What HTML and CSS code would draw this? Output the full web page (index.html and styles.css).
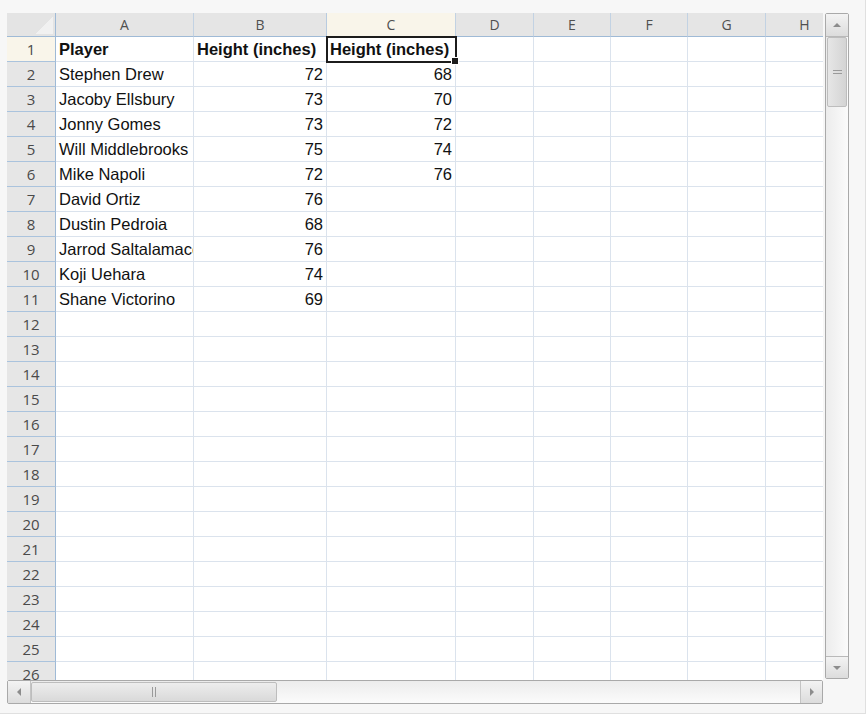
FILE: index.html
```html
<!DOCTYPE html>
<html lang="en">
<head>
    <meta charset="UTF-8">
    <title>Player Heights</title>
    <link rel="stylesheet" href="styles.css">
</head>
<body>
    <div class="window">
        <div class="workbook">
            <div class="sheet" id="sheet"></div>

            <div class="vscroll">
                <div class="sb-btn sb-up"><span class="arrow-up"></span></div>
                <div class="sb-thumb v-thumb"><span class="grip-h"></span></div>
                <div class="sb-track"></div>
                <div class="sb-btn sb-down"><span class="arrow-down"></span></div>
            </div>

            <div class="hscroll">
                <div class="sb-btn sb-left"><span class="arrow-left"></span></div>
                <div class="sb-thumb h-thumb"><span class="grip-v"></span></div>
                <div class="sb-track"></div>
                <div class="sb-btn sb-right"><span class="arrow-right"></span></div>
            </div>
        </div>
    </div>

    <script>
        const data = [
            ['Player', 'Height (inches)', 'Height (inches)'],
            ['Stephen Drew', 72, 68],
            ['Jacoby Ellsbury', 73, 70],
            ['Jonny Gomes', 73, 72],
            ['Will Middlebrooks', 75, 74],
            ['Mike Napoli', 72, 76],
            ['David Ortiz', 76],
            ['Dustin Pedroia', 68],
            ['Jarrod Saltalamacchia', 76],
            ['Koji Uehara', 74],
            ['Shane Victorino', 69]
        ];
        const cols = ['A', 'B', 'C', 'D', 'E', 'F', 'G', 'H'];
        const sheet = document.getElementById('sheet');

        function addCell(cls, text) {
            const d = document.createElement('div');
            d.className = cls;
            d.textContent = text;
            sheet.appendChild(d);
        }

        addCell('corner', '');
        cols.forEach(c => addCell(c === 'C' ? 'col-head active' : 'col-head', c));

        for (let r = 1; r <= 26; r++) {
            addCell(r === 1 ? 'row-head active' : 'row-head', r);
            const row = data[r - 1] || [];
            cols.forEach((c, i) => {
                const v = row[i];
                let cls = 'cell';
                if (typeof v === 'number') cls += ' num';
                if (r === 1 && v !== undefined) cls += ' bold';
                if (r === 1 && c === 'C') cls += ' selected';
                addCell(cls, v === undefined ? '' : v);
            });
        }
    </script>
</body>
</html>
```

FILE: styles.css
```css
* {
    box-sizing: border-box;
}
body {
    margin: 0;
    background-color: #fff;
}
.window {
    width: 866px;
    height: 714px;
    padding: 13px 0 0 7px;
    background-color: #f7f7f7;
    border-right: 1px solid #e0e0e0;
    border-bottom: 1px solid #e0e0e0;
}
.workbook {
    display: grid;
    grid-template-columns: 816px 26px;
    grid-template-rows: 667px 24px;
}

/* sheet grid */
.sheet {
    display: grid;
    grid-template-columns: 49px 138px 133px 129px 78px 77px 77px 78px 78px;
    grid-template-rows: 24px;
    grid-auto-rows: 25px;
    width: 816px;
    height: 667px;
    overflow: hidden;
    background-color: #fff;
}
.corner {
    background: linear-gradient(135deg, transparent 50%, #f1f1f1 50%) no-repeat right 2px bottom 2px / 18px 18px, #e4e4e4;
    border-right: 1px solid #9fbad6;
    border-bottom: 1px solid #9fbad6;
}
.col-head {
    background-color: #e5e5e5;
    border-right: 1px solid #c2d2e3;
    border-bottom: 1px solid #9fbad6;
    font-family: "Open Sans", sans-serif;
    font-size: 14px;
    line-height: 23px;
    color: #505050;
    text-align: center;
}
.row-head {
    background-color: #e6e6e6;
    border-right: 1px solid #9fbad6;
    border-bottom: 1px solid #aac3dd;
    font-family: "Open Sans", sans-serif;
    font-size: 15px;
    line-height: 25px;
    color: #4a4a4a;
    text-align: center;
}
.col-head.active,
.row-head.active {
    background-color: #f9f5ea;
}
.col-head.active {
    border-left: 1px solid #b8cbe0;
    margin-left: -1px;
    border-bottom-color: #f9f5ea;
}
.cell {
    border-right: 1px solid #dbe3ed;
    border-bottom: 1px solid #dbe3ed;
    padding: 0 3px;
    font-family: "Liberation Sans", Arial, sans-serif;
    font-size: 16.5px;
    line-height: 24px;
    color: #111;
    white-space: nowrap;
    overflow: hidden;
}
.cell.num {
    text-align: right;
}
.cell.bold {
    font-weight: bold;
}
.cell.selected {
    position: relative;
    overflow: visible;
    outline: 2px solid #1c1c1c;
    outline-offset: -1px;
}
.cell.selected::after {
    content: "";
    position: absolute;
    right: -4px;
    bottom: -4px;
    width: 6px;
    height: 6px;
    background-color: #1c1c1c;
    border: 1px solid #fff;
}

/* scrollbars */
.vscroll {
    grid-column: 2;
    grid-row: 1;
    margin-left: 2px;
    width: 24px;
    height: 666px;
    display: flex;
    flex-direction: column;
    border: 1px solid #a9a9a9;
    border-radius: 2px;
    background: linear-gradient(to right, #ececec, #fbfbfb);
}
.hscroll {
    grid-column: 1;
    grid-row: 2;
    height: 24px;
    display: flex;
    border: 1px solid #a9a9a9;
    border-radius: 2px;
    background: linear-gradient(to bottom, #ececec, #fbfbfb);
}
.sb-track {
    flex: 1;
}
.sb-btn {
    display: flex;
    align-items: center;
    justify-content: center;
    background: linear-gradient(to bottom, #f3f3f3, #dcdcdc);
}
.sb-up {
    height: 23px;
    border-bottom: 1px solid #b9b9b9;
}
.sb-down {
    height: 22px;
    border-top: 1px solid #b9b9b9;
}
.sb-left {
    width: 23px;
    border-right: 1px solid #c4c4c4;
}
.sb-right {
    width: 22px;
    border-left: 1px solid #c4c4c4;
}
.sb-thumb {
    display: flex;
    align-items: center;
    justify-content: center;
    border: 1px solid #bdbdbd;
    border-radius: 2px;
}
.v-thumb {
    height: 70px;
    margin: 0 1px;
    background: linear-gradient(to right, #e6e6e6, #d4d4d4);
}
.h-thumb {
    width: 246px;
    margin: 1px 0;
    background: linear-gradient(to bottom, #ededed, #d9d9d9);
}
.grip-h {
    width: 9px;
    height: 4px;
    border-top: 1px solid #9a9a9a;
    border-bottom: 1px solid #9a9a9a;
}
.grip-v {
    width: 4px;
    height: 10px;
    border-left: 1px solid #9a9a9a;
    border-right: 1px solid #9a9a9a;
}
.arrow-up {
    border-left: 4px solid transparent;
    border-right: 4px solid transparent;
    border-bottom: 4px solid #8c8c8c;
}
.arrow-down {
    border-left: 4px solid transparent;
    border-right: 4px solid transparent;
    border-top: 4px solid #8c8c8c;
}
.arrow-left {
    border-top: 4px solid transparent;
    border-bottom: 4px solid transparent;
    border-right: 4px solid #8c8c8c;
}
.arrow-right {
    border-top: 4px solid transparent;
    border-bottom: 4px solid transparent;
    border-left: 4px solid #8c8c8c;
}
```
